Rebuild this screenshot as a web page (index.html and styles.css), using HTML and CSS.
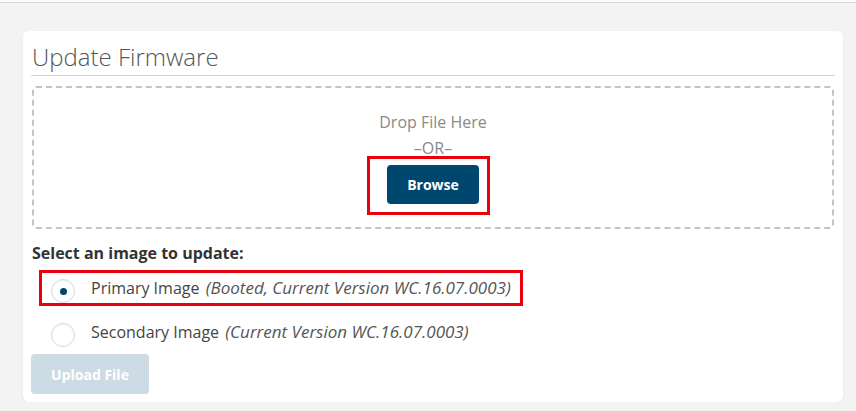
FILE: index.html
```html
<!DOCTYPE html>
<html lang="en">
<head>
    <meta charset="UTF-8">
    <meta name="viewport" content="width=device-width, initial-scale=1.0">
    <title>Update Firmware</title>
    <link rel="stylesheet" href="styles.css">
</head>
<body>
    <div class="topbar"></div>

    <!-- Firmware card -->
    <div class="card">
        <h2 class="card-title">Update Firmware</h2>

        <div class="dropzone">
            <p class="drop-text">Drop File Here</p>
            <p class="drop-text">&ndash;OR&ndash;</p>
            <button class="btn btn-primary marked" id="browse-btn">Browse</button>
        </div>

        <p class="select-label">Select an image to update:</p>

        <div class="image-row marked-row">
            <span class="radio checked"></span>
            <span class="image-name">Primary Image <em>(Booted, Current Version WC.16.07.0003)</em></span>
        </div>
        <div class="image-row">
            <span class="radio"></span>
            <span class="image-name">Secondary Image <em>(Current Version WC.16.07.0003)</em></span>
        </div>

        <button class="btn btn-disabled" disabled>Upload File</button>
    </div>
</body>
</html>
```

FILE: styles.css
```css
body {
    margin: 0;
    background: #f3f3f3;
    font-family: "Open Sans", Arial, sans-serif;
    color: #444;
}
.topbar {
    height: 2px;
    background: #fafafa;
    border-bottom: 1px solid #d6d6d6;
}
.card {
    width: 820px;
    margin: 28px 0 0 23px;
    padding: 0 8px 8px;
    box-sizing: border-box;
    background: #fff;
    border-radius: 6px;
    box-shadow: 0 1px 2px rgba(0, 0, 0, 0.08);
}
.card-title {
    margin: 0;
    padding: 11px 0 4px 1px;
    font-size: 24px;
    font-weight: 300;
    line-height: 29px;
    color: #555;
    border-bottom: 1px solid #d4d4d4;
}
.dropzone {
    margin: 10px 1px 0;
    padding: 21px 0 23px;
    border: 2px dashed #c4c4c4;
    border-radius: 4px;
    text-align: center;
}
.drop-text {
    margin: 0;
    font-size: 16px;
    line-height: 26px;
    color: #8a8a8a;
}
.btn {
    font-family: "Open Sans", Arial, sans-serif;
    font-size: 14px;
    font-weight: 700;
    color: #fff;
    border: none;
    border-radius: 4px;
    cursor: pointer;
}
.btn-primary {
    width: 92px;
    height: 39px;
    margin-top: 4px;
    background: #00476f;
}
.btn-disabled {
    width: 118px;
    height: 40px;
    background: #cddbe4;
    cursor: default;
}
.marked {
    position: relative;
}
.marked::after {
    content: "";
    position: absolute;
    top: -9px;
    right: -11px;
    bottom: -11px;
    left: -20px;
    border: 3px solid #e8000b;
}
.select-label {
    margin: 12px 0 0 1px;
    font-size: 16px;
    font-weight: 700;
    line-height: 24px;
    color: #333;
}
.image-row {
    display: flex;
    align-items: center;
    gap: 16px;
    height: 38px;
    margin: 7px 0 6px 20px;
}
.image-row + .image-row {
    margin: 0 0 0 20px;
}
.marked-row {
    position: relative;
}
.marked-row::after {
    content: "";
    position: absolute;
    top: -2px;
    left: -12px;
    width: 478px;
    bottom: 4px;
    border: 3px solid #e8000b;
}
.radio {
    width: 22px;
    height: 22px;
    border: 1px solid #d9d9d9;
    border-radius: 50%;
    box-shadow: inset 0 1px 2px rgba(0, 0, 0, 0.05);
    display: flex;
    align-items: center;
    justify-content: center;
}
.radio.checked::before {
    content: "";
    width: 7px;
    height: 7px;
    border-radius: 50%;
    background: #00476f;
}
.image-name {
    font-size: 16px;
    line-height: 24px;
    padding-bottom: 6px;
    color: #444;
}
.image-name em {
    margin-left: 2px;
    font-size: 17px;
    color: #555;
}
```
